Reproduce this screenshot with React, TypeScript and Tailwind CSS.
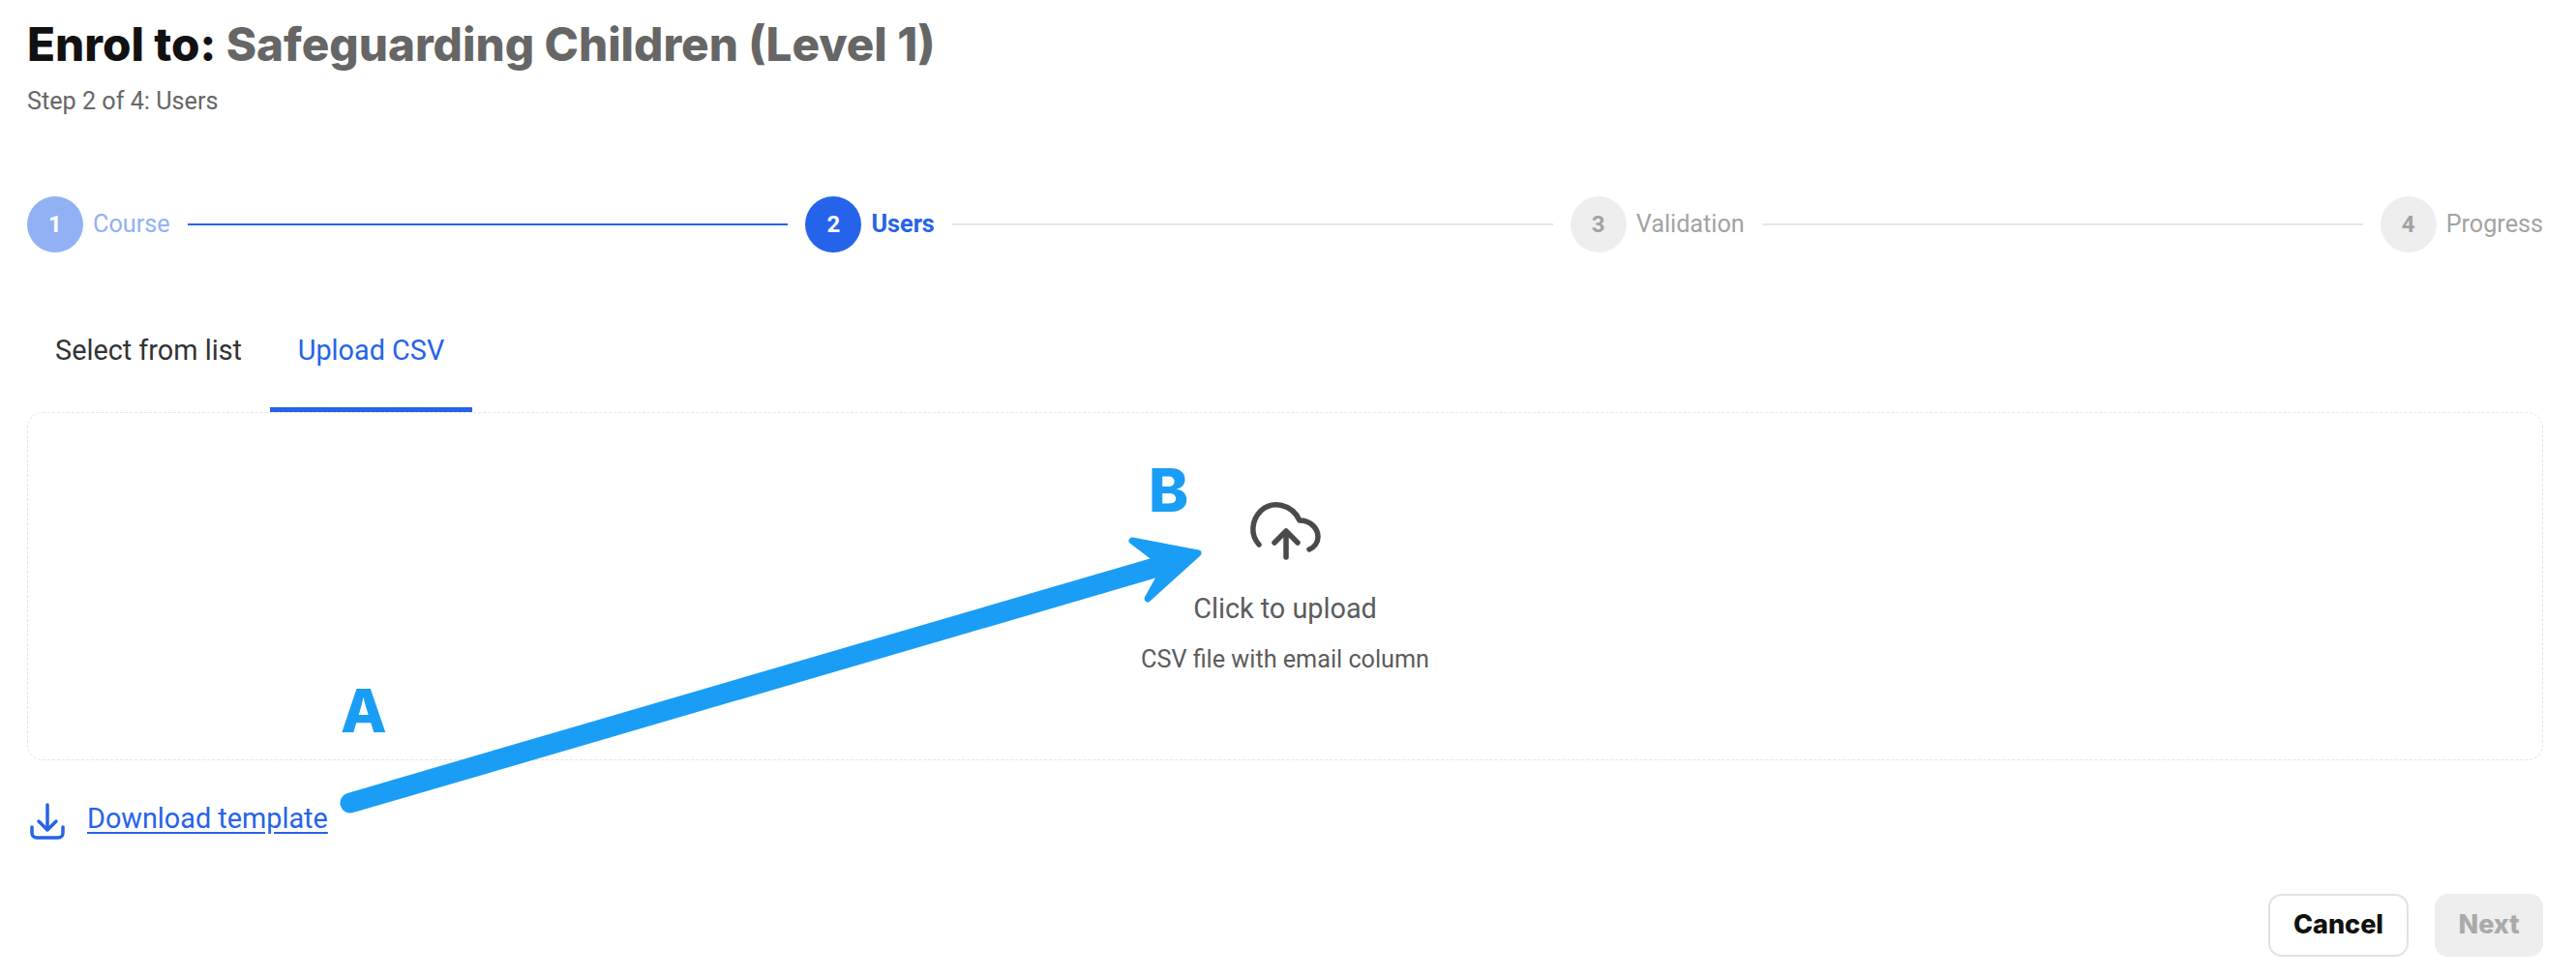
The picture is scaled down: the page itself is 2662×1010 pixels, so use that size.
import { Fragment } from "react";

const steps = [
  { n: 1, label: "Course", state: "done" },
  { n: 2, label: "Users", state: "active" },
  { n: 3, label: "Validation", state: "todo" },
  { n: 4, label: "Progress", state: "todo" },
];

const CloudIcon = () => (
  <svg width="80" height="64" viewBox="0 0 80 64" fill="none" stroke="#4a4a4a" strokeWidth="5.5" strokeLinecap="round" strokeLinejoin="round">
    <path d="M13 47C4 37 5 22 15 12C27 1 47 5 55 22C66 22 74 30 74 39C74 45 70 50 65 52" />
    <path d="M41 60V33M29 45L41 33L53 45" />
  </svg>
);

const DownloadIcon = () => (
  <svg width="38" height="38" viewBox="0 0 38 38" fill="none" stroke="#2563eb" strokeWidth="3.5" strokeLinecap="round" strokeLinejoin="round">
    <path d="M19 2V28M10 19L19 28L28 19" />
    <path d="M3 25V31C3 34 5 36 8 36H30C33 36 35 34 35 31V25" />
  </svg>
);

const App = () => {
  return (
    <div className="relative h-[1010px] w-full overflow-hidden bg-white pr-[34px] pl-[28px] font-['Roboto',sans-serif]">
      {/* Header */}
      <h1 className="pt-[18px] font-['Inter',sans-serif] text-[47.6px] leading-[56px] font-extrabold text-[#111111]">
        Enrol to: <span className="text-[#666666]">Safeguarding Children (Level 1)</span>
      </h1>
      <p className="mt-[16px] text-[25.2px] leading-[30px] text-[#666666]">Step 2 of 4: Users</p>

      {/* Stepper */}
      <div className="mt-[83px] flex items-center">
        {steps.map((s, i) => (
          <Fragment key={s.n}>
            <div className="flex items-center gap-[10px]">
              <div
                className={
                  s.state === "done"
                    ? "flex h-[58px] w-[58px] items-center justify-center rounded-full bg-[#92b1f5] text-[24px] font-bold text-white"
                    : s.state === "active"
                      ? "flex h-[58px] w-[58px] items-center justify-center rounded-full bg-[#2563eb] text-[24px] font-bold text-white"
                      : "flex h-[58px] w-[58px] items-center justify-center rounded-full bg-[#eeeeee] text-[24px] font-bold text-[#a3a3a3]"
                }
              >
                {s.n}
              </div>
              <span
                className={
                  s.state === "done"
                    ? "text-[25.2px] text-[#92b1f5]"
                    : s.state === "active"
                      ? "text-[25.2px] font-bold text-[#2563eb]"
                      : "text-[25.2px] text-[#a3a3a3]"
                }
              >
                {s.label}
              </span>
            </div>
            {i < steps.length - 1 && (
              <div className={i === 0 ? "mx-[18px] h-[2px] flex-1 bg-[#2563eb]" : "mx-[18px] h-[2px] flex-1 bg-[#e5e5e5]"} />
            )}
          </Fragment>
        ))}
      </div>

      {/* Tabs */}
      <div className="mt-[42px] flex">
        <div className="flex h-[123px] w-[251px] items-center justify-center pb-[3px] text-[28.8px] text-[#333333]">Select from list</div>
        <div className="flex h-[123px] w-[209px] items-center justify-center border-b-[5px] border-[#2563eb] pt-[2px] text-[28.8px] text-[#2563eb]">
          Upload CSV
        </div>
      </div>

      {/* Upload box */}
      <div className="flex h-[360px] flex-col items-center rounded-[16px] border border-dashed border-[#e5e5e5] pt-[89px]">
        <CloudIcon />
        <div className="mt-[32px] text-[28.8px] leading-[34px] text-[#5c5c5c]">Click to upload</div>
        <div className="mt-[21px] text-[25.2px] leading-[30px] text-[#5c5c5c]">CSV file with email column</div>
      </div>

      {/* Template link */}
      <div className="mt-[43px] flex items-center gap-[22px] pl-[2px]">
        <DownloadIcon />
        <a className="pb-[5px] text-[28.8px] leading-[34px] text-[#2563eb] underline underline-offset-[4px]">Download template</a>
      </div>

      {/* Actions */}
      <div className="mt-[56px] flex justify-end gap-[27px]">
        <button className="h-[65px] w-[145px] rounded-[14px] border-2 border-[#e2e2e2] bg-white font-['Inter',sans-serif] text-[27px] font-extrabold text-[#111111]">
          Cancel
        </button>
        <button className="h-[65px] w-[112px] rounded-[14px] bg-[#eeeeee] font-['Inter',sans-serif] text-[27px] font-extrabold text-[#aaaaaa]">
          Next
        </button>
      </div>

      {/* Annotation overlay */}
      <svg className="absolute top-0 left-0" width="2662" height="1010" fill="none" stroke="#1a9ef5" strokeLinecap="round" strokeLinejoin="round">
        <path d="M362 830L1210 582" strokeWidth="21" />
        <path d="M1170 559L1238 572L1186 619L1201 592L1191 575Z" strokeWidth="7" fill="#1a9ef5" />
      </svg>
      <span className="absolute top-[697px] left-[352px] font-['Inter',sans-serif] text-[62px] leading-[75px] font-extrabold text-[#1a9ef5]">A</span>
      <span className="absolute top-[469px] left-[1187px] font-['Inter',sans-serif] text-[62px] leading-[75px] font-extrabold text-[#1a9ef5]">B</span>
    </div>
  );
};

export default App;
